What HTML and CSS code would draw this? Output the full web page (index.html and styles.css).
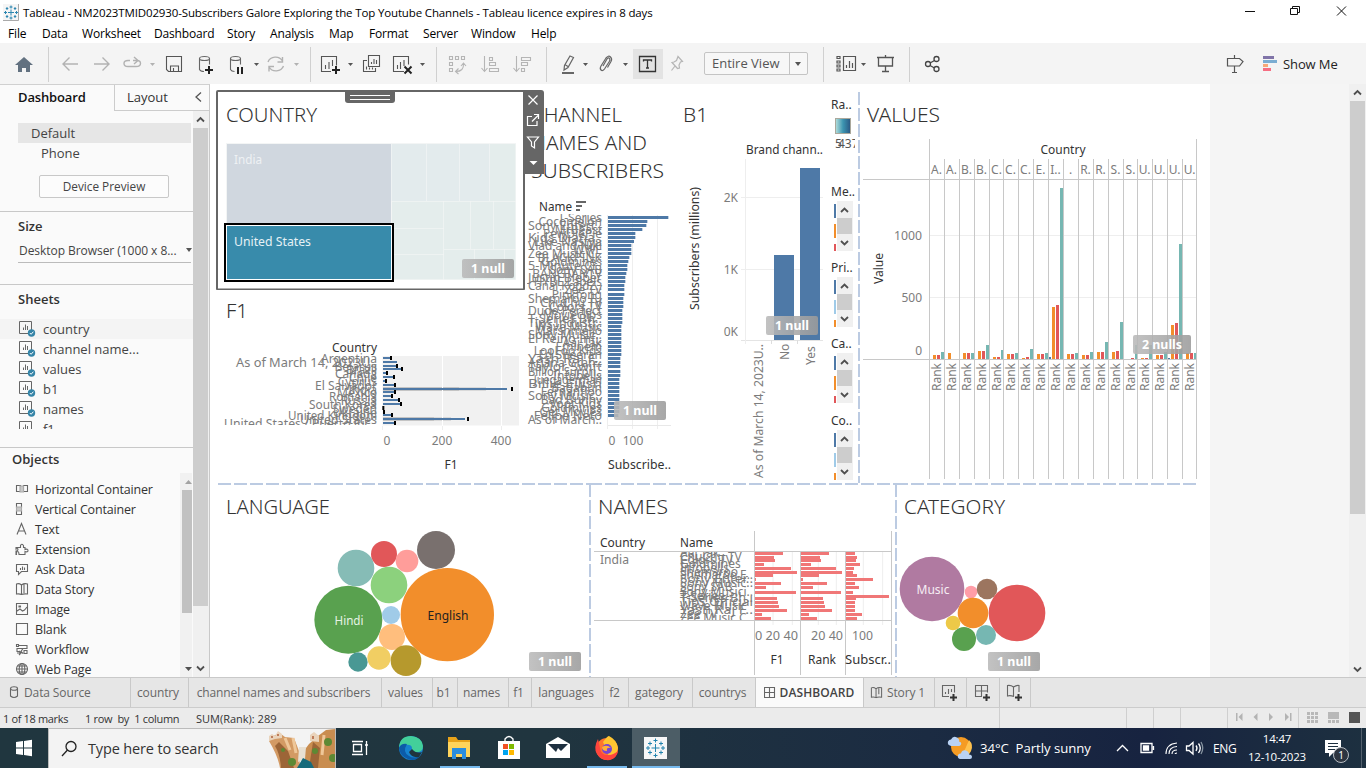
FILE: index.html
```html
<!DOCTYPE html>
<html lang="en">
<head>
<meta charset="utf-8">
<title>Tableau - NM2023TMID02930</title>
<link rel="stylesheet" href="styles.css">
</head>
<body>
<div class="app">
  <header class="titlebar">
    <svg class="logo" width="16" height="17" viewBox="0 0 16 17"><rect width="16" height="17" fill="#f5f5f5"/><path d="M15.5 0v16.500H0" stroke="#aaa" fill="none"/><path d="M8 5.500v6M5 8.500h6M8 1.500v3M6.500 3h3M8 12.500v3M6.500 14h3M1 8.500h3M2.500 7v3M12 8.500h3M13.500 7v3M4 3v3M2.800 4.500h2.500M12 3v3M10.800 4.500h2.500M4 11v3M2.800 12.500h2.500M12 11v3M10.800 12.500h2.500" stroke="#2c86b0" fill="none"/></svg>
    <span class="title">Tableau - NM2023TMID02930-Subscribers Galore Exploring the Top Youtube Channels - Tableau licence expires in 8 days</span>
    <svg class="winbtns" width="138" height="24" viewBox="1228 0 138 24" fill="none" stroke="#111"><path d="M1245 11.500h10M1290.500 8.500h7v6h-7zM1292.500 8v-1.500h7v6H1298M1337 6.500l9 9M1346 6.500l-9 9"/></svg>
  </header>
  <nav class="menu"><span>File</span><span>Data</span><span>Worksheet</span><span>Dashboard</span><span>Story</span><span>Analysis</span><span>Map</span><span>Format</span><span>Server</span><span>Window</span><span>Help</span></nav>

  <div class="toolbar">
    <svg width="48" height="41" viewBox="0 43 48 41"><path d="M24 57l9 8h-3v7h-4v-4h-4v4h-4v-7h-3z" fill="#627180"/></svg>
    <svg class="sep" width="262" height="41" viewBox="48 43 262 41" fill="none" stroke="#b2b2b2" stroke-width="1.400">
      <path d="M78 64H63M69.500 57.500L63 64l6.500 6.500M94 64h15M102.500 57.500L109 64l-6.500 6.500"/>
      <path d="M130 60.500h-2q-4 0-4 3t4 3h8q4.500 0 4.500-3t-3.500-3h-4M134 57l4 3.500-4 3.500"/>
      <path class="caret" d="M150 63h5l-2.500 3z" fill="#b2b2b2" stroke="none"/>
      <path d="M166.500 56.500h15v15h-13l-2-2zM170.500 71v-5h8v5M173.500 71v-3" stroke="#555" stroke-width="1.100"/>
      <g stroke="#666" stroke-width="1.100"><ellipse cx="204.500" cy="58.500" rx="5" ry="2"/><path d="M199.500 58.500v11q1 2 4.500 2M209.500 58.500v6"/><ellipse cx="235.500" cy="58.500" rx="5" ry="2"/><path d="M230.500 58.500v11q1 2 4 2M240.500 58.500v6"/></g>
      <path d="M205 70h8M209 66v8M238 67v7M242 67v7" stroke="#222" stroke-width="2"/>
      <path d="M254 63h5l-2.500 3z" fill="#555" stroke="none"/>
      <path d="M268 62a8 7.500 0 0 1 14.500-1M283.500 66a8 7.500 0 0 1-14.500 1M282.500 57v5h-5M269 71.500v-5h5"/>
      <path d="M294 63h5l-2.500 3z" fill="#b2b2b2" stroke="none"/>
    </svg>
    <svg class="sep" width="126" height="41" viewBox="310 43 126 41" fill="none" stroke="#555" stroke-width="1.100">
      <path d="M331 71.500h-9.500v-15h15v9M325.500 69v-4M329 69v-7M332.500 66v-6"/><path d="M332 70h8M336 66v8" stroke="#222" stroke-width="2"/>
      <path d="M348 63h5l-2.500 3z" fill="#555" stroke="none"/>
      <path d="M368.500 55.500h11v11h-11zM371.500 64v-2M374 64v-5M376.500 64v-4M367 60.500h-3.500v11h12v-3.500M366.500 69.500v-3M369.500 69.500v-2M372.500 69.500v-2"/>
      <path d="M404 71.500h-10.500v-15h15v8M397.500 69v-4M400.500 69v-7M404 66v-6"/><path d="M404.500 66.500l7 7M411.500 66.500l-7 7" stroke="#222" stroke-width="2"/>
      <path d="M420 63h5l-2.500 3z" fill="#555" stroke="none"/>
    </svg>
    <svg class="sep" width="110" height="41" viewBox="436 43 110 41" fill="none" stroke="#b5b5b5" stroke-width="1.100">
      <path d="M449.500 56.500h3v3h-3zM455.500 56.500h3v3h-3zM461.500 56.500h3v3h-3zM449.500 62.500h3v3h-3zM449.500 68.500h3v3h-3zM456 71.500q8 0 7.500-8M461 66l2.500-3 2.500 3M458.500 68.500l-3 3 3 2.500"/>
      <path d="M484.500 56v15M481.500 68l3 3.500 3-3.500M489.500 57.500h3v3h-3zM489.500 62.500h6v3h-6zM489.500 68.500h9v3h-9z"/>
      <path d="M516.500 56v15M513.500 68l3 3.500 3-3.500M521.500 57.500h9v3h-9zM521.500 62.500h6v3h-6zM521.500 68.500h3v3h-3z"/>
    </svg>
    <svg class="sep" width="158" height="41" viewBox="546 43 158 41" fill="none" stroke="#666" stroke-width="1.200">
      <path d="M570 56l3.500 1.500-5.500 10-4 2.500.5-4.500zM565.500 65l2.500 1.500"/><path d="M562 73h12" stroke-width="2"/><path d="M583 63h5l-2.500 3zM623 63h5l-2.500 3z" fill="#555" stroke="none"/>
      <path d="M603 66l4-7q1.500-2 2.500-.5t-.2 3L604.500 69q-2 2.500-3.500 1t0-4l5-8q2.500-3 4.500-1t.5 4.500l-3.500 6"/>
      <rect x="633" y="49" width="30" height="30" fill="#e3e3e3" stroke="none"/><path d="M639.500 56.500h16v15h-16zM643.500 61.500v-1.500h8v1.500M647.500 60v8M646 68h3" stroke="#333" stroke-width="1.300"/>
      <path d="M678 56.500l4.500 5-2 .5-1.500 3 .5 3-2 .5-5.500-6 2-.5 2.500-1.500zM675 66l-3.500 4.500" stroke="#b5b5b5"/>
    </svg>
    <div class="combo"><span>Entire View</span><i></i></div>
    <svg class="gap" width="15" height="41"></svg>
    <svg class="sep" width="86" height="41" viewBox="823 43 86 41" fill="none" stroke="#555" stroke-width="1.200">
      <path d="M843.500 56.500h12v14h-12zM846.500 68v-3M849.500 68v-7M852.500 68v-5M837 56.500h3v2h-3zM837 61h3v2h-3zM837 65h3v2h-3zM837 69h3v2h-3z"/><path d="M861 63h5l-2.500 3z" fill="#555" stroke="none"/>
      <path d="M877 57.500h17M878.500 57v9h14v-9M885.500 66v6M882 71.500h7M885.500 55v2" stroke-width="1.300"/>
    </svg>
    <svg class="sep" width="60" height="41" viewBox="909 43 60 41" fill="none" stroke="#444" stroke-width="1.300"><circle cx="928" cy="64" r="2.500"/><circle cx="936.500" cy="59" r="2.500"/><circle cx="936.500" cy="69" r="2.500"/><path d="M930 63l4.500-2.500M930 65.500l4.500 2.500"/></svg>
    <svg class="push" width="62" height="41" viewBox="1220 43 62 41"><path d="M1227.500 58.500h12l3.500 3-3.500 4.500h-12zM1234.500 55v3.500M1234.500 66v6.500M1232 72.500h5" fill="none" stroke="#555" stroke-width="1.200"/><path d="M1263 56h11v3h-11z" fill="#8074a8"/><path d="M1263 60h14v3h-14z" fill="#7badd2"/><path d="M1263 64h5v3h-5z" fill="#f7a878"/><path d="M1263 68h8v3h-8z" fill="#f66e82"/></svg>
    <span class="showme">Show Me</span>
  </div>

  <main class="work">
    <aside class="side">
      <div class="sidetabs"><b>Dashboard</b><span>Layout</span><svg width="8" height="12" viewBox="0 0 8 12"><path d="M6.500 1.500L1.500 6l5 4.500" fill="none" stroke="#555" stroke-width="1.300"/></svg></div>
      <div class="sidebody">
        <div class="panel">
          <section class="devices"><div class="dev on">Default</div><div class="dev phone">Phone</div><button>Device Preview</button></section>
          <section class="size"><h3>Size</h3><div class="sel"><span>Desktop Browser (1000 x 8...</span><i></i></div></section>
          <section class="sheets"><h3>Sheets</h3><div class="sheetlist" id="sheetlist"></div></section>
          <section class="objects"><h3>Objects</h3>
            <div class="objwrap">
              <div class="objlist">
                <div><svg viewBox="0 0 14 14"><path d="M1.500 3.500h4v6h-4zM8.500 3.500h4v6h-4z"/><path d="M5 4h3.500v6H5z" class="soft"/></svg>Horizontal Container</div>
                <div><svg viewBox="0 0 14 14"><path d="M1.500 1.500h5v4h-5zM1.500 8.500h5v4h-5z"/><path d="M1.500 5h5v4h-5z" class="soft"/></svg>Vertical Container</div>
                <div><svg viewBox="0 0 14 14"><path d="M2 12.500L6.500 1.500l4.500 11M3.500 9h6"/></svg>Text</div>
                <div><svg viewBox="0 0 14 14"><path d="M3.500 5.500h2v-2q1-2.500 3 0v2h1.500v2q3-1 3 1t-3 1v3h-6q0-3-1.500-3t-1 3H1V9q2 0 2-1.500t-2-.5V5.500z"/></svg>Extension</div>
                <div><svg viewBox="0 0 14 14"><path d="M1.500 2.500h11v7h-6l-3 3v-3h-2zM5.500 8V6M7.500 8V4.500M9.500 8V5.500"/></svg>Ask Data</div>
                <div><svg viewBox="0 0 14 14"><path d="M6.500 3Q4 1 1.500 2v10q3-.5 5 .5 2-1 6-.5V2Q9 1 6.500 3zM6.500 3v9.500M9 2v9"/></svg>Data Story</div>
                <div><svg viewBox="0 0 14 14"><path d="M1.500 1.500h11v11h-11zM2 9l3-2 2.500 2 2-1L12 5M4 4h1.500v1H4z"/></svg>Image</div>
                <div><svg viewBox="0 0 14 14"><path d="M1.500 1.500h11v11h-11z"/></svg>Blank</div>
                <div><svg viewBox="0 0 14 14"><path d="M1.500 2.500h2v2h-2zM4 3.500h8v3H2v3h3M9 8.500h3v3H9zM5 11H2M8 6.500l-2 3 2 2M4 9l2 2-2 2"/></svg>Workflow</div>
                <div><svg viewBox="0 0 14 14"><circle cx="7" cy="7" r="5.500"/><ellipse cx="7" cy="7" rx="2.800" ry="5.500"/><path d="M1.500 7h11M2.500 4h9M2.500 10h9M7 1.500v11"/></svg>Web Page</div>
              </div>
              <svg class="objscroll" width="12" height="204" viewBox="180 473 12 204"><rect x="180" y="473" width="12" height="204" fill="#f1f1f1"/><rect x="182" y="490" width="10" height="123" fill="#c1c1c1"/><path d="M185 484h7l-3.500-4z" fill="#a3a3a3"/><path d="M185 667h7l-3.500 4z" fill="#505050"/></svg>
            </div>
          </section>
        </div>
        <svg class="sidescroll" width="16" height="566" viewBox="193 111 16 566"><rect x="193" y="111" width="16" height="566" fill="#f0f0f0"/><rect x="193" y="128" width="15" height="478" fill="#cdcdcd"/><path d="M197 121.500l3.500-3.500 3.500 3.500M197 666.500l3.500 3.500 3.500-3.500" fill="none" stroke="#505050" stroke-width="1.800"/></svg>
      </div>
    </aside>

    <div class="canvas">
      <div class="toprow">
        <div class="leftcol">
          <div class="zone country">
            <svg id="country" width="317" height="206" viewBox="210 84 317 206"></svg>
            <svg class="handle" width="50" height="13" viewBox="0 0 50 13"><path d="M0 0h50v10q0 3-3 3H3q-3 0-3-3z" fill="#666"/><path d="M5 5.500h40M5 9.500h40" stroke="#fff"/></svg>
            <svg class="zonetools" width="21" height="84" viewBox="523 90 21 84"><path d="M523 90h18q3 0 3 3v81h-21z" fill="#666"/><path d="M528.500 95.500l9 9M537.500 95.500l-9 9M532 116.500h-4.500v9h9.500v-4.500M532 121.500l6-6M534 114.500h4.500v4.500M527.500 137h11l-4 5v6l-3-2v-4z" fill="none" stroke="#fff" stroke-width="1.200"/><path d="M529.500 161h8l-4 4z" fill="#fff"/></svg>
          </div>
          <svg id="f1" width="317" height="193" viewBox="210 290 317 193"></svg>
        </div>
        <svg id="channels" width="148" height="399" viewBox="527 84 148 399"></svg>
        <svg id="b1" width="154" height="399" viewBox="675 84 154 399"></svg>
        <svg id="legends" width="28" height="399" viewBox="829 84 28 399"></svg>
        <svg id="values" width="353" height="399" viewBox="857 84 353 399"></svg>
      </div>
      <div class="botrow">
        <svg id="language" width="379" height="194" viewBox="210 483 379 194"></svg>
        <svg id="names" width="306" height="194" viewBox="589 483 306 194"></svg>
        <svg id="category" width="315" height="194" viewBox="895 483 315 194"></svg>
      </div>
    </div>
    <div class="outside"></div>
    <svg class="mainscroll" width="17" height="593" viewBox="1349 84 17 593"><rect x="1349" y="84" width="17" height="593" fill="#f0f0f0"/><rect x="1350" y="101" width="15" height="413" fill="#cdcdcd"/><path d="M1354 94.500l3.500-3.500 3.500 3.500M1354 667.500l3.500 3.500 3.500-3.500" fill="none" stroke="#505050" stroke-width="1.800"/></svg>
  </main>

  <div class="tabs">
    <span class="src"><svg width="10" height="13" viewBox="0 0 10 13"><ellipse cx="5" cy="2.500" rx="3.500" ry="1.800"/><path d="M1.500 2.500v7.500q3.500 3 7 0V2.500"/></svg>Data Source</span>
    <span>country</span><span>channel names and subscribers</span><span>values</span><span>b1</span><span>names</span><span>f1</span><span>languages</span><span>f2</span><span>gategory</span><span>countrys</span>
    <span class="active"><svg width="12" height="12" viewBox="0 0 12 12"><path d="M.5.500h10v10H.5zM5.500.500v10M.5 5.500h10"/></svg>DASHBOARD</span>
    <span><svg width="13" height="13" viewBox="0 0 14 14"><path d="M6.500 3Q4 1 1.500 2v10q3-.5 5 .5 2-1 6-.5V2Q9 1 6.500 3zM6.500 3v9.500M9.500 2v7"/></svg>Story 1</span>
    <span><svg width="18" height="18" viewBox="0 0 18 18"><path d="M9 12.500H2.500v-11h12v7M5.500 10V8M8.500 10V5M11.500 8V5"/><path class="dark" d="M10 13.500h7M13.500 10v7"/></svg></span>
    <span><svg width="18" height="18" viewBox="0 0 18 18"><path d="M9 12.500H2.500v-11h12v7M8.500 1.500v11M2.500 7h12"/><path class="dark" d="M10 13.500h7M13.500 10v7"/></svg></span>
    <span><svg width="18" height="18" viewBox="0 0 18 18"><path d="M9 12.500Q5 11 2.500 12V1.500Q6 1 8.500 3q3-2 5.500-1.500V8M8.500 3v9"/><path class="dark" d="M10 13.500h7M13.500 10v7"/></svg></span>
  </div>

  <div class="status">
    <span>1 of 18 marks</span><span>1 row&nbsp; by&nbsp; 1 column</span><span>SUM(Rank): 289</span>
    <svg width="367" height="20" viewBox="999 708 367 20"><path d="M999.500 708v20M1126.500 708v20M1153.500 708v20M1180.500 708v20M1227.500 708v20M1298.500 708v20" stroke="#cfcfcf"/><path d="M1236 713h1.500v8h-1.500zM1242.500 713v8l-4-4zM1257.500 713v8l-4-4zM1269 713v8l4-4zM1285 713v8l4-4zM1290 713h1.500v8h-1.500z" fill="#b3b3b3"/><g fill="#b8b8b8"><path d="M1307 712h3v3h-3zM1311 712h3v3h-3zM1315 712h3v3h-3zM1307 716h3v3h-3zM1311 716h3v3h-3zM1315 716h3v3h-3zM1307 720h3v3h-3zM1311 720h3v3h-3zM1315 720h3v3h-3zM1328 712h11v7h-11zM1328 720h3v3h-3zM1332 720h3v3h-3zM1336 720h3v3h-3z"/></g><path d="M1349 712h11v11h-11z" fill="#555"/></svg>
  </div>

  <footer class="taskbar">
    <svg width="48" height="40" viewBox="0 728 48 40"><path d="M16 742l7-1v6.500h-7zM24 740.900l8-1.200v7.800h-8zM16 748.500h7v6.500l-7-1zM24 748.500h8v7.800l-8-1.200z" fill="#fff"/></svg>
    <div class="search">
      <svg width="18" height="18" viewBox="0 0 18 18"><circle cx="11" cy="6.500" r="5" fill="none" stroke="#222" stroke-width="1.300"/><path d="M7.500 10L2 16" stroke="#222" stroke-width="1.300"/></svg>
      <span>Type here to search</span>
      <svg class="scene" width="66" height="39" viewBox="270 729 66 39"><path d="M270 741l6-6 6-1 4 3 9 1 5 13 1 17h-20q-2-12-11-27z" fill="#d39a64"/><path d="M336 729v39h-34l2-16 6-8 9-8 8-6z" fill="#c98d50"/><path d="M280 742l9 9 6 17h-13q-1-14-6-22zM314 742l7 6-2 20h-9z" fill="#9c6537"/><path d="M286 738l5 12M294 738l3 15M325 735l-2 20" stroke="#efc799" stroke-width="3"/><path d="M300 747l7 0-1 12-7 3z" fill="#e8e0d2"/><path d="M298 768l6-10 8 4 3 6z" fill="#176b7b"/><g fill="#5e8934"><circle cx="329" cy="742" r="4"/><circle cx="316" cy="751" r="3"/><circle cx="293" cy="762" r="4"/><circle cx="334" cy="758" r="4"/><circle cx="284" cy="750" r="2"/></g><path d="M270 741v-5l3-2 3 2 3-5 4 3v4l-7 1zM311 741v-6l4-3 5 4v6z" fill="#e9d3bb"/><path d="M273 736v2M279 734v2M314 736v3" stroke="#b0623c" stroke-width="1.500"/></svg>
    </div>
    <svg width="346" height="40" viewBox="336 728 346 40">
      <path d="M352 741.500h11M352 754.500h11M353.500 744.500h8v7h-8zM366.500 741v14M365 745h3" fill="none" stroke="#fff" stroke-width="1.300"/>
      <circle cx="411" cy="748" r="12" fill="#1683cf"/><path d="M399 747q1-11 12-11 11 1 12 10 0 7-8 6-4-1-3-4-1-6-13-1z" fill="#43cf9a"/><path d="M399 748q2-5 8-4-5 8 2 12 5 3 11 0-5 6-12 3-8-3-9-11z" fill="#0c5ba8"/><path d="M412 749q4 5 10 3l-3 5q-8 1-10-5z" fill="#20343d"/>
      <path d="M448 737h8l2 3h12v17h-22z" fill="#e8a31a"/><path d="M448 742h22v15h-22z" fill="#ffd45b"/><path d="M452 748h14v11h-4v-5h-6v5h-4z" fill="#2a8dde"/>
      <path d="M505 741v-2q4-5 8 0v2" fill="none" stroke="#fff" stroke-width="1.300"/><path d="M498 741h22v18h-22z" fill="#fff"/><path d="M503 744h5v5h-5z" fill="#f25022"/><path d="M509 744h5v5h-5z" fill="#7fba00"/><path d="M503 750h5v5h-5z" fill="#00a4ef"/><path d="M509 750h5v5h-5z" fill="#ffb900"/>
      <path d="M546 744l12-7 12 7v14h-24z" fill="#fff"/><path d="M548 744h20l-7 7-3-3-2 4z" fill="#1e3040"/>
      <circle cx="607" cy="749" r="11" fill="#ff762f"/><path d="M603 742q5-7 6-6 8 4 9 12-2 9-8 11z" fill="#ffc631"/><path d="M598 739q-5 9-1 15 4 7 13 6 7-2 8-9-5 4-9 4-8 1-9-7z" fill="#ff453d"/><circle cx="607" cy="749" r="5" fill="#7a45cf"/><path d="M602 747q5-3 9 1-5-1-4 3-5 0-5-4z" fill="#ffb238"/>
      <rect x="632" y="728" width="48" height="40" fill="#4c5d66"/><rect x="644" y="737" width="23" height="22" fill="#f7f7f7"/><path d="M655.500 744v8M651.500 748h8M655.500 738.500v4M653.500 740.500h4M655.500 753.500v4M653.500 755.500h4M646 748h4M648 746v4M661 748h4M663 746v4M650 741.500v4M648 743.500h4M661 741.500v4M659 743.500h4M650 750.500v4M648 752.500h4M661 750.500v4M659 752.500h4" stroke="#2383ae" fill="none"/>
      <path d="M440 766h40v2h-40zM587 766h40v2h-40zM632 766h48v2h-48z" fill="#76b9ed"/>
    </svg>
    <svg class="weather" width="32" height="40" viewBox="944 728 32 40"><circle cx="961" cy="747" r="10" fill="#f59b23"/><path d="M961 757a10 10 0 0 0 8-17q-3 8-8 17z" fill="#ffc14d"/><path d="M951 746q-4-1-3-4.500 1-2 3-2 2-4 6-2 3 2 2 4 3 1 2 3-1 2-3 1.500zM960 759q-3-1-2-4 1-2 3-1.500 1-4 5-3 3 1 3 4 3 0 3 2.500t-3 2z" fill="#b9d2f4"/></svg>
    <span class="wx">34°C&nbsp; Partly sunny</span>
    <svg width="96" height="40" viewBox="1112 728 96 40" fill="none" stroke="#fff" stroke-width="1.300"><path d="M1117 751l5.500-5.500 5.500 5.500"/><path d="M1141 743.500h11v9h-11zM1153.500 746v4"/><path d="M1143.500 746h5v4h-5z" fill="#fff"/><path d="M1166 754q0-10 11-11M1169 754q0-7 8-7.500M1172 754q0-4 5-4M1175 754q0-1 2-1" stroke-width="1.100"/><path d="M1186.500 746h2.500l4-3.500v11.500l-4-3.500h-2.500zM1196 745.500q2 2.500 0 5.500M1198.500 743.500q3.500 4.500 0 9.500"/><path d="M1201 742q3.500 6 0 12" stroke="#8794a0"/></svg>
    <span class="eng">ENG</span>
    <span class="clock">14:47<br>12-10-2023</span>
    <svg class="note" width="44" height="40" viewBox="1322 728 44 40"><path d="M1325 740h16v13h-8l-4 4v-4h-4z" fill="#fff"/><path d="M1328 743.500h10M1328 746.500h10M1328 749.500h7" stroke="#1d2f3f"/><circle cx="1341" cy="755" r="7.500" fill="#2d3540" stroke="#b9bec4"/><text x="1341" y="759" font-size="10" fill="#fff" text-anchor="middle">1</text><path d="M1361.500 728v40" stroke="#53606d"/></svg>
  </footer>
</div>
<script src="app.js"></script>
</body>
</html>
```

FILE: styles.css
```css
* { box-sizing: border-box; }
body { margin: 0; width: 1366px; height: 768px; overflow: hidden; background: #fff; font-family: "Open Sans", "Noto Sans", sans-serif; font-size: 12px; color: #222; }
svg { display: block; flex: none; }
svg text { font-family: "Noto Sans", "Open Sans", sans-serif; }
.app { display: flex; flex-direction: column; width: 1366px; height: 768px; }

.titlebar { height: 24px; display: flex; align-items: center; padding-left: 3px; color: #000; }
.title { margin-left: 4px; font-size: 11.500px; letter-spacing: -0.14px; white-space: nowrap; }
.winbtns { margin-left: auto; }
.menu { height: 19px; display: grid; grid-template-columns: 34px 40px 72px 73px 43px 59px 40px 54px 48px 60px 50px; padding-left: 8px; line-height: 20px; color: #000; letter-spacing: -0.16px; }

.toolbar { height: 41px; background: #f4f4f4; display: flex; align-items: center; }
.sep { background: linear-gradient(#d0d0d0, #d0d0d0) 0 4px / 1px 35px no-repeat; }
.combo { width: 104px; height: 23px; border: 1px solid #c4c4c4; border-radius: 2px; display: flex; align-items: center; color: #555; font-size: 13px; background: #f7f7f7; }
.combo span { width: 85px; padding-left: 7px; line-height: 21px; border-right: 1px solid #c4c4c4; white-space: nowrap; }
.combo i, .sel i { border: 3.500px solid transparent; border-top: 4px solid #555; border-bottom: 0; }
.combo i { margin-left: 5px; }
.push { margin-left: auto; }
.showme { width: 84px; font-size: 13px; color: #222; padding-left: 1px; white-space: nowrap; letter-spacing: -.1px; }

.work { height: 593px; display: flex; }
.side { width: 210px; border-right: 1px solid #c9c9c9; border-top: 1px solid #d0d0d0; background: #fafafa; display: flex; flex-direction: column; }
.sidetabs { height: 26px; display: flex; align-items: center; font-size: 13px; flex: none; }
.sidetabs b { width: 114px; padding: 0 0 2px 18px; font-weight: 600; color: #111; letter-spacing: -.15px; }
.sidetabs span { width: 80px; height: 26px; padding-left: 12px; line-height: 24px; border-left: 1px solid #ccc; border-bottom: 1px solid #ccc; color: #333; }
.sidetabs svg { width: 15px; height: 26px; padding: 6px 6px 7px 0; border-bottom: 1px solid #ccc; }
.sidebody { display: flex; height: 566px; }
.panel { width: 193px; height: 566px; overflow: hidden; color: #444; }
.panel h3 { margin: 0; font-size: 13px; font-weight: 600; color: #333; line-height: 20px; }
.devices { height: 101px; padding: 12px 2px 0 18px; border-bottom: 1px solid #c8c8c8; font-size: 13px; }
.dev { height: 20px; line-height: 20px; padding-left: 13px; }
.dev.on { background: #e6e6e6; }
.phone { padding-left: 23px; }
.devices button { display: block; width: 130px; height: 23px; margin: 12px 0 0 21px; padding: 0 0 2px; border: 1px solid #c8c8c8; border-radius: 2px; background: #fcfcfc; color: #444; font: 11.800px "Open Sans", sans-serif; }
.size { height: 73px; padding: 4px 2px 0 18px; border-bottom: 1px solid #c8c8c8; }
.sel { display: flex; align-items: center; height: 27px; border-bottom: 1px solid #bbb; padding: 2px 0 0 1px; font-size: 12px; color: #444; white-space: nowrap; letter-spacing: -.05px; }
.sel i { margin-left: auto; margin-right: -1px; }
.sheets { height: 163px; padding-top: 4px; border-bottom: 1px solid #c8c8c8; }
.sheets h3 { padding-left: 18px; }
.sheetlist { margin-top: 10px; height: 110px; overflow: hidden; font-size: 13px; }
.sheetlist div { height: 20px; padding-left: 19px; display: flex; align-items: center; gap: 7px; line-height: 20px; }
.sheetlist div:first-child { background: #f4f4f4; }
.objects { padding-top: 1px; }
.objects h3 { padding-left: 12px; font-size: 13px; }
.objwrap { display: flex; margin-top: 4px; height: 204px; overflow: hidden; }
.objlist { width: 180px; padding: 6px 0 0 15px; font-size: 12.500px; color: #333; white-space: nowrap; letter-spacing: -.18px; }
.objlist div { height: 20px; display: flex; align-items: center; gap: 6px; }
.objlist svg { width: 14px; height: 14px; fill: none; stroke: #666; stroke-width: 1.100; }
.objlist .soft { fill: #c9c9c9; stroke: #aaa; }

.canvas { width: 1000px; background: #fff; }
.toprow { display: flex; height: 399px; }
.leftcol { width: 317px; }
.zone { position: relative; }
.handle { position: absolute; left: 135px; top: 6px; }
.zonetools { position: absolute; left: 313px; top: 6px; z-index: 2; }
.botrow { display: flex; height: 194px; }
.outside { width: 139px; background: #f5f5f5; }

.tabs { height: 31px; display: grid; grid-template-columns: 131px 58px 193px 51px 25px 51px 23px 72px 25px 64px 63px 108px 71px 32px 33px 31px; background: #e6e6e6; border-top: 1px solid #c9c9c9; border-bottom: 1px solid #ccc; color: #666; font-size: 12px; letter-spacing: -.12px; }
.tabs span { border-right: 1px solid #c9c9c9; display: flex; align-items: center; justify-content: center; gap: 4px; padding-right: 3px; white-space: nowrap; }
.tabs .src { justify-content: flex-start; padding-left: 9px; gap: 5px; }
.tabs svg { fill: none; stroke: #666; stroke-width: 1.100; }
.tabs .dark { stroke: #333; stroke-width: 2; }
.tabs .active { background: #fafafa; color: #444; font-weight: 600; letter-spacing: .1px; padding-right: 1px; }

.status { height: 20px; background: #ebebeb; display: flex; align-items: center; padding-left: 3px; font-size: 11px; color: #333; white-space: nowrap; }
.status span:nth-child(1) { width: 82px; letter-spacing: -.35px; }
.status span:nth-child(2) { width: 111px; letter-spacing: -.3px; }
.status svg { margin-left: auto; }

.taskbar { height: 40px; display: flex; align-items: center; background: linear-gradient(90deg, #20363f 0%, #20353f 40%, #1b2b42 68%, #172340 84%, #1d3040 100%); color: #fff; }
.search { width: 288px; height: 40px; background: #f3f3f3; border: 1px solid #bbb; border-bottom: 0; display: flex; align-items: center; padding-left: 11px; color: #333; font-size: 14.500px; white-space: nowrap; }
.search span { margin-left: 10px; letter-spacing: -.15px; }
.scene { margin-left: auto; }
.weather { margin-left: 262px; }
.wx { width: 136px; padding-left: 4px; font-size: 13.200px; white-space: nowrap; letter-spacing: -.05px; }
.eng { width: 32px; padding-left: 5px; font-size: 12px; letter-spacing: -.4px; }
.clock { width: 74px; text-align: center; font-size: 11.500px; line-height: 18px; letter-spacing: -.2px; }
.note { margin-left: auto; }
```

FILE: app.js
```javascript
const BLUE = '#4e79a7', ORANGE = '#f28e2b', RED = '#e15759', TEAL = '#76b7b2', LIGHT = '#a0cbe8';
const esc = s => s.replace(/&/g, '&amp;').replace(/</g, '&lt;');
const rect = (x, y, w, h, f, extra = '') => `<rect x="${x}" y="${y}" width="${w}" height="${h}" fill="${f}" ${extra}/>`;
const line = (x1, y1, x2, y2, c, extra = '') => `<path d="M${x1} ${y1}L${x2} ${y2}" stroke="${c}" fill="none" ${extra}/>`;
const circ = (x, y, r, f) => `<circle cx="${x}" cy="${y}" r="${r}" fill="${f}"/>`;
// Text with an optional fixed advance width and rotation about its origin.
function text(x, y, s, o = {}) {
  const a = [`x="${x}"`, `y="${y}"`, `font-size="${o.size || 12}"`, `fill="${o.fill || '#7c7c7c'}"`];
  if (o.anchor) a.push(`text-anchor="${o.anchor}"`);
  if (o.len) a.push(`textLength="${o.len}" lengthAdjust="spacingAndGlyphs"`);
  if (o.weight) a.push(`font-weight="${o.weight}"`);
  if (o.rot) a.push(`transform="rotate(-90 ${x} ${y})"`);
  return `<text ${a.join(' ')}>${esc(s)}</text>`;
}
const title = (x, y, s, len) => text(x, y, s, { size: 20, fill: '#333', len, weight: 300 });
const head = (x, y, s, o = {}) => text(x, y, s, { fill: '#333', ...o });
const grad = '<defs><linearGradient id="nb"><stop offset="0" stop-color="#bababa"/><stop offset="1" stop-color="#9b9b9b"/></linearGradient></defs>';
const badge = (x, y, s = '1 null', w = 52) => `<rect x="${x}" y="${y}" width="${w}" height="19" rx="2" fill="url(#nb)" fill-opacity=".88"/>` + text(x + w / 2, y + 14, s, { fill: '#fff', weight: 700, anchor: 'middle', len: w - 18 });
const dash = (x1, y1, x2, y2) => line(x1, y1, x2, y2, '#bccbe2', 'stroke-width="2" stroke-dasharray="13 3"');
const put = (id, parts) => { document.getElementById(id).innerHTML = parts.join(''); };

const countries = ['Argentina', 'As of March 14, 2023U..', 'Belarus', 'Brazil', 'Canada', 'Chile', 'Cyprus', 'El Salvador', 'India', 'Mexico', 'Romania', 'Russia', 'South Korea', 'Sweden', 'Ukraine', 'United Kingdom', 'United States', 'United States / Puerto Ric..'];
const countryLen = { 0: 56, 1: 141, 4: 42, 7: 62, 10: 48, 12: 68, 15: 89, 16: 77, 17: 153 };

document.getElementById('sheetlist').innerHTML = ['country', 'channel name...', 'values', 'b1', 'names', 'f1'].map(n =>
  `<div><svg width="17" height="16" viewBox="0 0 17 16"><path d="M.5.500h12v12H.5zM4.500 9V6.500M6.500 9V3.500M8.500 9V5" fill="none" stroke="#666"/><circle cx="12.500" cy="12" r="3.700" fill="#3584a7"/><path d="M10.800 12l1.300 1.300 2.300-2.600" stroke="#fff" fill="none"/></svg>${n}</div>`).join('');

// Treemap of countries with the United States mark selected
const cells = [[391.700, 144, 34.600, 57], [427, 144, 32.300, 57], [460, 144, 29.300, 57], [490, 144, 25.300, 57], [392, 201.700, 51.300, 26.300], [392, 228.700, 51.300, 25.600], [392, 255, 51.300, 24.300], [444, 201.700, 26.300, 47.300], [471, 201.700, 22.300, 47.300], [494, 201.700, 21.300, 47.300], [444, 249.700, 30.300, 29.600], [475, 249.700, 29.300, 29.600], [505, 249.700, 10.300, 29.600]];
put('country', [grad, '<rect x="217" y="91" width="307" height="198.500" rx="1" fill="none" stroke="#666" stroke-width="2"/>',
  title(226, 122, 'COUNTRY', 91), rect(226, 143, 290, 137, '#f3f5f5'), rect(227, 144, 164, 80, '#d0d7df'),
  ...cells.map((c, i) => rect(...c, i < 3 ? '#e3ebed' : '#e4edec')),
  rect(225, 224, 168, 57, '#fff', 'stroke="#000" stroke-width="2"'), rect(227, 226, 164, 53, '#388bab'),
  text(234, 164, 'India', { fill: '#eef1f4', len: 28 }), text(234, 246, 'United States', { fill: '#e6f1f5', len: 77 }), badge(462, 259)]);

// Bullet bars by country
const fe = [522, 543, 540, 555, 511, 532, 508, 536, 873, 535, 526, 547, 552, 502, 502, 526, 747, 535];
const ft = [525, 0, 543, 558, 513, 534, 510, 537, 888, 537, 528, 549, 555, 502, 504, 528, 756, 537];
const fy = [192, 204, 216, 225, 237, 249, 261, 273, 285, 294, 306, 318, 330, 342, 354, 363, 375, 387];
const fx = v => 216 + v / 3, fyy = v => 294 + v / 3;
put('f1', ['<clipPath id="cf"><path d="M222 350h300v75H222z"/></clipPath>', title(226, 318, 'F1', 22), head(377, 352, 'Country', { anchor: 'end', len: 45 }),
  rect(382.500, 356, 136.500, 69.500, '#f1f1f1'), rect(383, 387, 103, 4, '#d9d9d9'), rect(383, 387, 76, 4, '#c4c4c4'), rect(383, 417, 68, 4, '#d9d9d9'), rect(383, 417, 51, 4, '#c4c4c4'), line(442.500, 356, 442.500, 428, '#fff'), line(501.500, 356, 501.500, 428, '#fff'),
  '<g clip-path="url(#cf)">', ...countries.map((c, i) => text(377, fyy(fy[i]) + 4.500, c, { anchor: 'end', len: countryLen[i] })), '</g>',
  ...fe.map((v, i) => rect(383, Math.round(fyy(fy[i])) - 1, fx(v) - 383, 2, BLUE)), ...ft.map((v, i) => v ? rect(fx(v) - 1, Math.round(fyy(fy[i])) - 2, 2, 4, '#000') : ''),
  ...[['0', 387], ['200', 442], ['400', 501]].map(a => text(a[1], 445, a[0], { anchor: 'middle' })), ...[382.500, 442.500, 501.500].map(x => line(x, 426, x, 430, '#eee')), head(451, 469, 'F1', { anchor: 'middle' }), dash(218, 484, 527, 484)]);

// Subscribers by channel
const ce = [444, 381, 378, 366, 345, 345, 341, 333, 333, 333, 327, 324, 321, 321, 318, 315, 315, 312, 312, 312, 309, 309, 309, 306, 306, 306, 306, 303, 303, 303, 303, 303, 303, 303, 303, 300, 300, 300, 300, 300, 297, 297, 297, 297, 297, 297, 297, 297, 297, 294, 294];
const cn = ['T-Series', 'Cocomelon', 'Sony Entert..', 'MrBeast', 'PewDiePie', 'Kids Diana..', 'Like Nastya', 'Vlad and Niki', 'WWE', 'Zee Music C..', 'BLACKPINK', 'Goldmines', '5-Minute Cr..', 'Sony SAB', 'BANGTANTV', 'Justin Bieber', 'HYBE Labels', 'Canal KondZ..', 'Zee TV', 'Pinkfong', 'Shemaroo F..', 'ChuChu TV', 'Colors TV', 'Dude Perfect', 'Movieclips', 'T-Series Bh..', 'Tips Industr..', 'Wave Music', 'Marshmello', 'Sony Music..', 'El Reino Inf..', 'Aaj Tak', 'Eminem', 'LooLoo Kids', 'Ed Sheeran', 'Yash Raj F..', 'Ariana Gran..', 'Taylor Swift', 'Billion Surpri..', 'Infobells', 'Juegagerman', 'Billie Eilish', 'Badabun', 'Fernanfloo', 'Sony Music..', 'Bad Bunny', 'Voot Kids', 'Goldmines', 'Get Movies', 'Felipe Neto', 'As of March..'];
const cy = i => 216 + Math.floor(i * 4.050 + .1);
put('channels', ['<clipPath id="cc"><path d="M527 214h80v212h-80z"/></clipPath>',
  title(531, 122, 'CHANNEL', 91), title(531, 150, 'NAMES AND', 116), title(531, 178, 'SUBSCRIBERS', 133),
  head(539, 211, 'Name', { len: 33 }), rect(576, 201, 10, 2, '#666'), rect(576, 205, 6, 2, '#666'), rect(576, 209, 4, 2, '#666'),
  ...[608, 633, 658].map(x => line(x - .5, 215, x - .5, 429, '#eee')), line(608, 425.500, 671, 425.500, '#e8e8e8'),
  '<g clip-path="url(#cc)">', ...cn.map((n, i) => text(602, cy(i) + 6, n, { anchor: 'end', len: n.length > 10 ? Math.min(74, n.length * 6.200) : 0 })), '</g>',
  ...ce.slice(0, 50).map((v, i) => rect(608, cy(i), (v - 263) / 3, 3, BLUE)), badge(614, 401), text(612, 445, '0', { anchor: 'middle' }), text(633, 445, '100', { anchor: 'middle' }), head(608, 469, 'Subscribe..', { len: 63 }), dash(527, 484, 675, 484)]);

put('b1', [title(683, 122, 'B1', 25), head(746, 154, 'Brand chann..', { len: 77 }), ...[197.500, 269.500].map(y => line(741, y, 823, y, '#eee')), line(741, 340.500, 823, 340.500, '#e4e4e4'), line(745.500, 159, 745.500, 344, '#eee'), line(771.500, 340, 771.500, 344, '#ddd'), line(797.500, 340, 797.500, 344, '#ddd'),
  rect(774, 255, 20, 85, BLUE), rect(800, 168, 20, 172, BLUE), text(738, 202, '2K', { anchor: 'end' }), text(738, 274, '1K', { anchor: 'end' }), text(738, 336, '0K', { anchor: 'end' }),
  head(699, 310, 'Subscribers (millions)', { rot: 1, len: 123 }), text(763, 478, 'As of March 14, 2023U..', { rot: 1, len: 134 }), text(789, 360, 'No', { rot: 1 }), text(815, 365, 'Yes', { rot: 1 }), badge(766, 316), dash(675, 484, 829, 484)]);

const legend = (name, ly, top, bot, cols) => head(831, ly, name) + [0, 1, 2].map(i => rect(834, top + 3 + i * 20, 2, Math.min(14, bot - top - 3 - i * 20), cols[i])).join('') +
  rect(837, top, 16, bot - top, '#f0f0f0') + rect(837, top + 17, 15, 16, '#cdcdcd') +
  `<path d="M841 ${top + 11}l3.500-3.500 3.500 3.500M841 ${bot - 10}l3.500 3.500 3.500-3.500" fill="none" stroke="#505050" stroke-width="1.800"/>`;
put('legends', ['<defs><linearGradient id="lg"><stop offset="0" stop-color="#b6dfdb"/><stop offset=".5" stop-color="#3c95b1"/><stop offset="1" stop-color="#2a5783"/></linearGradient><clipPath id="cl"><path d="M829 84h26v399h-26z"/></clipPath></defs>',
  head(831, 109, 'Ra..'), '<rect x="835.500" y="118.500" width="15" height="15" fill="url(#lg)" stroke="#aaa89c"/>', `<g clip-path="url(#cl)">${text(835, 148, '5', { fill: '#555' })}${text(838, 148, '437', { fill: '#555' })}</g>`,
  legend('Me..', 196, 201, 251, [BLUE, ORANGE, RED]), legend('Pri..', 272, 277, 327, [BLUE, LIGHT, ORANGE]), legend('Ca..', 348, 353, 403, [BLUE, ORANGE, RED]), legend('Co..', 425, 430, 480, [BLUE, LIGHT, ORANGE]), dash(829, 484, 857, 484)]);

// Measure values per country
const vx = [208, 253, 298, 343, 388, 430, 475, 520, 565, 610, 655, 700, 745, 790, 832, 877, 922, 967, 1009].map(v => Math.round(860 + (v - 1) / 3) + .5);
const vb = [[813, 813, 804], [807, 0, 0], [807, 807, 807], [801, 801, 783], [819, 819, 798], [810, 810, 807], [822, 819, 795], [810, 810, 807], [669, 663, 312], [810, 810, 807], [813, 813, 804], [804, 804, 774], [804, 801, 714], [0, 822, 783], [822, 822, 783], [813, 813, 804], [723, 717, 480], [807, 807, 807]];
const vl = ['A.', 'A.', 'B.', 'B.', 'C.', 'C.', 'C.', 'E.', 'I..', '.', 'R.', 'R.', 'S.', 'S.', 'U.', 'U.', 'U.', 'U.'];
put('values', [dash(859, 92, 859, 484), title(867, 122, 'VALUES', 73), head(1063, 154, 'Country', { anchor: 'middle', len: 45 }), line(930, 235.500, 1197, 235.500, '#eee'), line(930, 297.500, 1197, 297.500, '#eee'),
  ...vb.flatMap((b, i) => b.map((v, k) => v ? rect(vx[i] + 3.500 + k * 4, 84 + v / 3, 3, (825 - v) / 3, [ORANGE, RED, TEAL][k]) : '')), rect(1049, 357, 2, 2, BLUE), rect(1168, 358, 2, 1, BLUE),
  ...vx.map((x, i) => line(x, i === 0 || i === 18 ? 139 : 159, x, 479, '#c8c8c8')), line(863, 179.500, 1197, 179.500, '#c8c8c8'), line(863, 359.500, 1197, 359.500, '#c8c8c8'),
  ...vl.map((s, i) => text(vx[i] + 7, 174, s, { anchor: 'middle' })), ...vl.map((s, i) => text(vx[i] + 11.500, 391, 'Rank', { rot: 1, len: 28 })),
  text(922, 240, '1000', { anchor: 'end', len: 28 }), text(922, 302, '500', { anchor: 'end' }), text(922, 355, '0', { anchor: 'end' }), head(883, 284, 'Value', { rot: 1, len: 31 }), badge(1133, 335, '2 nulls', 58), dash(857, 484, 1198, 484)]);

const sc = (ox, a) => circ(ox + a[0] / 3, 480 + a[1] / 3, a[2] / 3, a[3]);
put('language', [dash(218, 484, 589, 484), title(226, 514, 'LANGUAGE', 104), ...[[420, 264, 55, '#86bcb6'], [504, 222, 39, RED], [573, 243, 34, '#ff9d9a'], [660, 210, 57, '#79706e'], [519, 315, 55, '#8cd17d'], [694, 404, 140, ORANGE], [397, 419, 102, '#59a14f'], [525, 405, 27, LIGHT], [528, 471, 39, '#ffbe7d'], [426, 546, 29, '#499894'], [489, 534, 35, '#f1ce63'], [570, 542, 46, '#b6992d']].map(a => sc(216, a)),
  text(349, 625, 'Hindi', { anchor: 'middle', fill: '#e6f2e4', len: 29 }), text(448, 620, 'English', { anchor: 'middle', fill: '#222', len: 41 }), badge(529, 652)]);

const ny = [219, 230, 241, 253, 265, 277, 286, 298, 310, 322, 335, 347, 355, 367, 379, 391, 403, 415];
const nb = [[495, [579, 552, 555, 522, 603, 621, 549, 498, 573, 528, 618, 495, 561, 564, 567, 591, 516, 543]], [633, [717, 690, 693, 663, 738, 756, 687, 639, 711, 669, 753, 633, 699, 702, 705, 726, 657, 681]], [768, [795, 801, 798, 810, 792, 789, 801, 849, 795, 807, 789, 897, 798, 795, 795, 795, 816, 801]]];
const nn = ['Aaj Tak', 'ChuChu TV', 'Colors TV', 'Goldmines', 'Infobells', 'Shemaroo', 'Shemaroo E..', 'Sony Enter..', 'Sony Music..', 'Sony SAB', 'Sony Musici..', 'T-Series', 'T-Series Bh..', 'Tips Official', 'Wave Music', 'Yash Raj F..', 'Zee TV', 'Zee Music C..'];
put('names', ['<clipPath id="cn"><path d="M675 552h80v68h-80z"/></clipPath>', dash(589, 484, 895, 484), dash(590, 484, 590, 677), title(598, 514, 'NAMES', 70), head(600, 547, 'Country', { len: 45 }), head(680, 547, 'Name', { len: 33 }), text(600, 564, 'India', { len: 29 }),
  ...[549, 607, 685, 739, 820, 878].map(x => line(590 + x / 3, 552, 590 + x / 3, 625, '#eee')), ...nb.flatMap(g => g[1].map((e, i) => rect(590 + g[0] / 3, Math.round(480 + ny[i] / 3) - 1, (e - g[0]) / 3, 3, '#f07777'))),
  '<g clip-path="url(#cn)">', ...nn.map((n, i) => text(680, 480 + ny[i] / 3 + 4, n, { len: n.length > 10 ? 73 : 0 })), '</g>',
  ...[493, 631, 766, 904].map((x, i) => line(Math.floor(590 + x / 3) + .5, i % 3 ? 552 : 531, Math.floor(590 + x / 3) + .5, 675, '#c8c8c8')), line(594, 551.500, 892, 551.500, '#c8c8c8'), line(594, 620.500, 892, 620.500, '#c8c8c8'),
  text(755, 640, '0 20 40', { len: 43 }), text(811, 640, '20 40', { len: 32 }), text(852, 640, '100', { len: 21 }), head(777, 664, 'F1', { anchor: 'middle' }), head(822, 664, 'Rank', { anchor: 'middle', len: 28 }), head(845, 664, 'Subscr..', { len: 46 })]);

put('category', [dash(895, 484, 1198, 484), dash(896, 484, 896, 677), title(904, 514, 'CATEGORY', 101), ...[[1026, 327, 97, '#b07aa1'], [1143, 336, 19, '#ff9da7'], [1191, 327, 31, '#9c755f'], [1281, 399, 85, RED], [1149, 399, 46, ORANGE], [1089, 429, 22, '#edc948'], [1122, 477, 36, '#59a14f'], [1188, 465, 30, TEAL]].map(a => sc(590, a)),
  text(933, 594, 'Music', { anchor: 'middle', fill: '#f6edf4', len: 33 }), badge(988, 652)]);
```
